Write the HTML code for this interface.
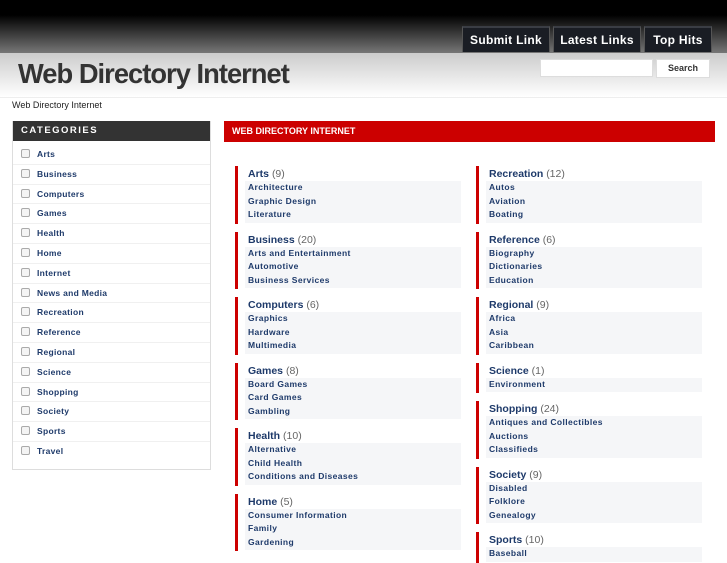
<!DOCTYPE html><html><head><style>
*{margin:0;padding:0;box-sizing:border-box}
body{width:727px;height:545px;overflow:hidden;background:#fff;font-family:"Liberation Sans",sans-serif;position:relative}
.top{position:absolute;left:0;top:0;width:727px;height:53px;background:linear-gradient(#000 0,#000 15px,#777 53px)}
.hdr{position:absolute;left:0;top:53px;width:727px;height:45px;background:linear-gradient(#ccc,#fff);border-bottom:1px solid #eee}
.tab{position:absolute;top:26px;height:26px;background:#1a1d24;border:1px solid #555;border-bottom:none;color:#fff;font-weight:bold;font-size:12px;line-height:25px;text-align:center;border-top:2px solid #3a3d44;letter-spacing:.3px}
h1{position:absolute;left:18px;top:58px;font-size:28px;color:#333;letter-spacing:-1px;font-weight:bold;transform:scaleX(.975);transform-origin:left}
.in{position:absolute;left:540px;top:59px;width:113px;height:18px;background:#fff;border:1px solid #ddd}
.btn{position:absolute;left:656px;top:59px;width:54px;height:19px;background:#fff;border:1px solid #ddd;font-size:9px;font-weight:bold;color:#333;text-align:center;line-height:17px}
.bc{position:absolute;left:12px;top:100px;font-size:9px;color:#222}
.side{position:absolute;left:12px;top:121px;width:199px;height:349px;border:1px solid #ddd;border-top:none}
.sh{height:20px;background:#333;color:#fff;font-size:9.5px;font-weight:bold;letter-spacing:1.5px;line-height:20px;padding-left:8px}
.si{position:absolute;left:8px;font-size:8.5px;font-weight:bold;color:#1e3a6a;letter-spacing:.3px}
.si i{display:inline-block;width:9px;height:9px;border:1px solid #aaa;border-radius:2px;margin-right:7px;vertical-align:-1px;background:#f4f4f4}
.sl{position:absolute;left:0;width:197px;border-top:1px solid #f0f0f0}
.mh{position:absolute;left:224px;top:121px;width:491px;height:21px;background:#c00;color:#fff;font-size:9px;font-weight:bold;line-height:20px;padding-left:8px}
.g{position:absolute;width:226px}
.g .bar{position:absolute;left:0;top:0;width:3px;height:58px;background:#c00}
.g b.t{position:absolute;left:13px;top:1px;font-size:10.5px;color:#1e3a6a;line-height:14px;font-weight:bold}
.g b.t span{font-weight:normal;color:#666}
.g .box{position:absolute;left:10px;top:15px;width:216px;height:41px;background:#f5f6f8}
.g .s{position:absolute;left:13px;font-size:8.5px;font-weight:bold;color:#1e3a6a;letter-spacing:.4px;line-height:11px}
</style></head><body>
<div class="top"></div>
<div class="tab" style="left:462px;width:88px">Submit Link</div>
<div class="tab" style="left:553px;width:88px">Latest Links</div>
<div class="tab" style="left:644px;width:68px">Top Hits</div>
<div class="hdr"></div>
<h1>Web Directory Internet</h1>
<div class="in"></div><div class="btn">Search</div>
<div class="bc">Web Directory Internet</div>
<div class="side"><div class="sh">CATEGORIES</div>
<div id="sb"></div></div>
<div class="mh">WEB DIRECTORY INTERNET</div>
<div id="m"></div>
<script>
var c=["Arts","Business","Computers","Games","Health","Home","Internet","News and Media","Recreation","Reference","Regional","Science","Shopping","Society","Sports","Travel"],h="";
c.forEach(function(n,i){var y=28+i*19.8;h+='<div class="si" style="top:'+y+'px"><i></i>'+n+'</div>';if(i)h+='<div class="sl" style="top:'+(y-5)+'px"></div>'});
document.getElementById("sb").innerHTML=h;
var L=[["Arts",9,["Architecture","Graphic Design","Literature"]],["Business",20,["Arts and Entertainment","Automotive","Business Services"]],["Computers",6,["Graphics","Hardware","Multimedia"]],["Games",8,["Board Games","Card Games","Gambling"]],["Health",10,["Alternative","Child Health","Conditions and Diseases"]],["Home",5,["Consumer Information","Family","Gardening"]]],
R=[["Recreation",12,["Autos","Aviation","Boating"]],["Reference",6,["Biography","Dictionaries","Education"]],["Regional",9,["Africa","Asia","Caribbean"]],["Science",1,["Environment"]],["Shopping",24,["Antiques and Collectibles","Auctions","Classifieds"]],["Society",9,["Disabled","Folklore","Genealogy"]],["Sports",10,["Baseball"]]];
function col(a,x){var o="",y=166;a.forEach(function(g){var n=g[2].length,bh=n*13.5+1;o+='<div class="g" style="left:'+x+'px;top:'+y+'px"><div class="bar" style="height:'+(bh+16)+'px"></div><div class="box" style="height:'+(bh)+'px"></div><b class="t">'+g[0]+' <span>('+g[1]+')</span></b>';g[2].forEach(function(s,j){o+='<div class="s" style="top:'+(16+j*13.5)+'px">'+s+'</div>'});o+='</div>';y+=n*13.5+25});return o}
document.getElementById("m").innerHTML=col(L,235)+col(R,476);
</script>
</body></html>
